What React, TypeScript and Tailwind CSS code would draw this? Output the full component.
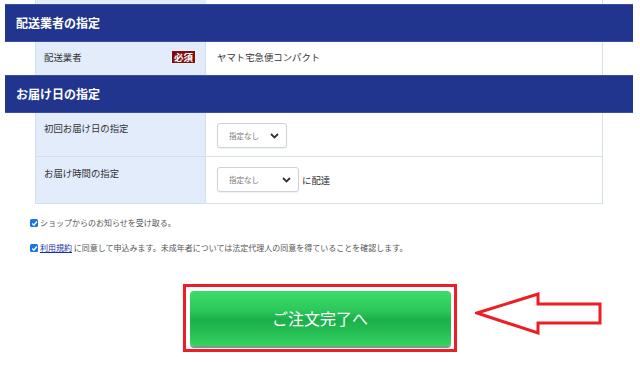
import React from 'react';

const font = { fontFamily: '"Noto Sans CJK JP", "Noto Sans", sans-serif' };

const SelectBox: React.FC<{ width: string }> = ({ width }) => (
  <div className={`${width} h-[25px] border border-[#cfd3d8] rounded-[3px] bg-white flex items-center justify-between pl-[11px] pr-[7px] shadow-[0_1px_1px_rgba(0,0,0,0.06)]`}>
    <span className="text-[7.5px] text-[#7a7a7a]">指定なし</span>
    <svg width="9" height="6" viewBox="0 0 9 6">
      <path d="M1 1 L4.5 4.5 L8 1" fill="none" stroke="#333" strokeWidth="1.8" />
    </svg>
  </div>
);

const Check: React.FC = () => (
  <span className="w-[8px] h-[8px] rounded-[1.5px] bg-[#1a73e8] flex items-center justify-center shrink-0">
    <svg width="7" height="7" viewBox="0 0 7 7">
      <path d="M1.2 3.6 L2.9 5.2 L5.9 1.5" fill="none" stroke="#fff" strokeWidth="1.4" />
    </svg>
  </span>
);

const SectionBar: React.FC<{ title: string }> = ({ title }) => (
  <div className="ml-[5px] w-[628px] h-[38px] bg-[#21358f] border-y border-[#3a4ea3] flex items-center pl-[11px]">
    <span className="text-white font-bold text-[12px]">{title}</span>
  </div>
);

export default function App() {
  return (
    <div className="w-[640px] h-[373px] bg-white overflow-hidden" style={font}>
      {/* tail of previous row */}
      <div className="ml-[35px] w-[568px] h-[4px] flex">
        <div className="w-[171px] bg-[#e2ecfa] border-l border-[#d3def0]" />
        <div className="flex-1 border-r border-[#d3def0]" />
      </div>

      <SectionBar title="配送業者の指定" />

      <div className="ml-[35px] w-[568px] h-[33px] flex text-[9.4px] leading-[12px] text-[#333]">
        <div className="w-[171px] bg-[#e2ecfa] border-l border-r border-[#d3def0] flex items-start justify-between pl-[8px] pr-[9px] pt-[9px]">
          <span>配送業者</span>
          <span className="h-[14px] w-[25px] bg-[#7f0c0c] border border-[#f2f2f2] text-white font-bold text-[9.5px] leading-[12px] flex items-center justify-center -mt-[1px]">必須</span>
        </div>
        <div className="flex-1 border-r border-[#d3def0] pl-[11px] pt-[9px]">
          <span>ヤマト宅急便コンパクト</span>
        </div>
      </div>

      <SectionBar title="お届け日の指定" />

      <div className="ml-[35px] w-[568px] border-b border-[#d3def0] text-[9.4px] leading-[12px] text-[#333]">
        <div className="h-[44px] flex border-b border-[#d3def0]">
          <div className="w-[171px] bg-[#e2ecfa] border-l border-r border-[#d3def0] pl-[8px] pt-[9px]">
            <span>初回お届け日の指定</span>
          </div>
          <div className="flex-1 border-r border-[#d3def0] pl-[11px] pt-[10px]">
            <SelectBox width="w-[70px]" />
          </div>
        </div>
        <div className="h-[46px] flex">
          <div className="w-[171px] bg-[#e2ecfa] border-l border-r border-[#d3def0] pl-[8px] pt-[10px]">
            <span>お届け時間の指定</span>
          </div>
          <div className="flex-1 border-r border-[#d3def0] pl-[11px] pt-[10px] flex items-start">
            <SelectBox width="w-[82px]" />
            <span className="ml-[3px] mt-[7px]">に配達</span>
          </div>
        </div>
      </div>

      <div className="ml-[30px] mt-[14px] flex items-center gap-[2px]">
        <Check />
        <span className="text-[8px] text-[#555] leading-[10px]">ショップからのお知らせを受け取る。</span>
      </div>
      <div className="ml-[30px] mt-[15px] flex items-center gap-[2px]">
        <Check />
        <span className="text-[8px] text-[#555] leading-[10px]">
          <a className="text-[#1a2fa8] underline decoration-[#1a2fa8]">利用規約</a> に同意して申込みます。未成年者については法定代理人の同意を得ていることを確認します。
        </span>
      </div>

      <div className="ml-[183px] mt-[31px] flex items-start">
        <div className="w-[274px] h-[68px] border-[3px] border-[#ee1c25] flex items-center justify-center">
          <button className="w-[261px] h-[55px] rounded-[4px] bg-[linear-gradient(to_bottom,#3ddc68_0%,#2cc95a_35%,#1bb04a_52%,#25be53_75%,#36d462_100%)] shadow-[0_2px_0_#7f9888] text-white text-[16px] leading-none">
            ご注文完了へ
          </button>
        </div>
        <svg className="ml-[18px] mt-[8px]" width="128" height="44" viewBox="0 0 128 44">
          <path d="M2 21 L63 2 L63 12 L125 12 L125 31 L63 31 L63 41 Z" fill="none" stroke="#ee1c25" strokeWidth="3" strokeLinejoin="miter" />
        </svg>
      </div>
    </div>
  );
}
